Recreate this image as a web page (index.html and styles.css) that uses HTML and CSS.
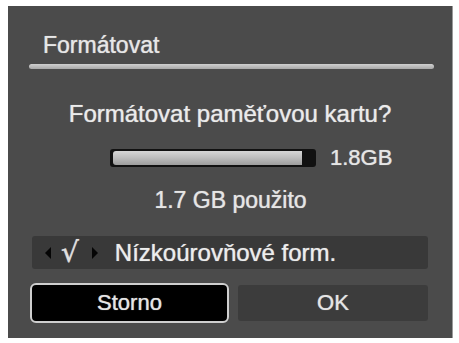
FILE: index.html
```html
<!DOCTYPE html>
<html lang="cs">
<head>
<meta charset="utf-8">
<link rel="stylesheet" href="styles.css">
</head>
<body>
<div class="panel">
  <div class="title">Formátovat</div>
  <div class="rule"></div>
  <div class="question">Formátovat paměťovou kartu?</div>
  <div class="capacity">
    <div class="bar"><div class="fill"></div></div>
    <span class="size">1.8GB</span>
  </div>
  <div class="used">1.7 GB použito</div>
  <div class="option">
    <span class="arrow left"></span>
    <span class="check">√</span>
    <span class="arrow right"></span>
    <span class="opt-label">Nízkoúrovňové form.</span>
  </div>
  <div class="buttons">
    <div class="btn cancel">Storno</div>
    <div class="btn ok">OK</div>
  </div>
</div>
</body>
</html>
```
FILE: styles.css
```css
html, body {
  margin: 0;
  padding: 0;
  background: #ffffff;
}
body {
  font-family: "Liberation Sans", Arial, sans-serif;
  color: #e6e6e6;
}
.panel {
  margin: 6px 0 0 8px;
  width: 444px;
  height: 332px;
  background: #4b4b4b;
  box-sizing: border-box;
  display: flex;
  flex-direction: column;
  box-shadow: 1px 0 0 #9a9a9a;
  text-shadow: 0 0 1px rgba(230, 230, 230, 0.6);
  -webkit-text-stroke: 0.2px #e6e6e6;
}
.title {
  font-size: 23px;
  line-height: 26px;
  padding: 26px 0 0 35px;
  height: 32px;
  color: #e8e8e8;
}
.rule {
  margin: 0 18px 0 21px;
  height: 5px;
  border-radius: 3px;
  background: linear-gradient(#d0d0d0, #a8a8a8);
}
.question {
  margin-top: 32px;
  font-size: 24px;
  line-height: 26px;
  text-align: center;
  color: #ececec;
}
.capacity {
  margin-top: 18px;
  display: flex;
  align-items: center;
  padding-left: 102px;
  height: 26px;
}
.bar {
  width: 206px;
  height: 18px;
  box-sizing: border-box;
  background: #111;
  border-radius: 3px;
  padding: 2px 14px 2px 3px;
  display: flex;
}
.fill {
  flex: 1;
  border-radius: 3px 0 0 3px;
  background: linear-gradient(#d6d6d6, #bcbcbc 50%, #9d9d9d);
}
.size {
  margin-left: 14px;
  font-size: 22px;
  color: #e6e6e6;
}
.used {
  margin-top: 16px;
  font-size: 23px;
  line-height: 26px;
  text-align: center;
  padding-left: 1px;
  color: #e6e6e6;
}
.option {
  margin: 23px 24px 0 24px;
  height: 33px;
  background: #393939;
  border-radius: 3px;
  display: flex;
  align-items: center;
}
.arrow {
  width: 0;
  height: 0;
  border-top: 6px solid transparent;
  border-bottom: 6px solid transparent;
}
.arrow.left {
  margin-left: 13px;
  border-right: 6px solid #050505;
}
.arrow.right {
  border-left: 6px solid #050505;
}
.check {
  font-size: 28px;
  color: #e0e0e0;
  margin: 0 13px 0 10px;
  font-family: "DejaVu Sans", sans-serif;
}
.opt-label {
  margin-left: 17px;
  font-size: 24px;
  color: #eeeeee;
}
.buttons {
  margin: 14px 24px 0 22px;
  display: flex;
  gap: 9px;
  align-items: center;
}
.btn {
  font-size: 22px;
  text-align: center;
  box-sizing: border-box;
}
.cancel {
  width: 199px;
  height: 40px;
  line-height: 36px;
  background: #000;
  border: 2px solid #cfcfcf;
  border-radius: 6px;
}
.ok {
  flex: 1;
  height: 36px;
  line-height: 36px;
  background: #3c3c3c;
  border-radius: 3px;
}
```
